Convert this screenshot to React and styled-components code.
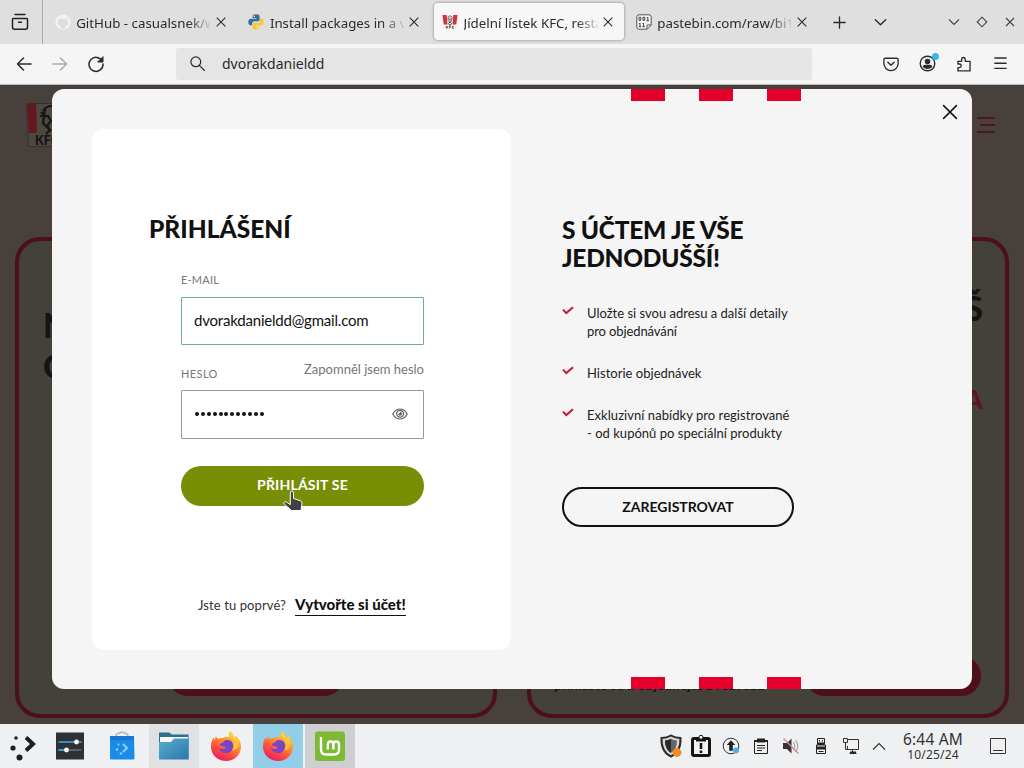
import styled, { createGlobalStyle, css } from 'styled-components';

const tabs = [
  { title: 'GitHub - casualsnek/waydroid', icon: 'github' },
  { title: 'Install packages in a virtual', icon: 'python' },
  { title: 'Jídelní lístek KFC, restaurace', icon: 'kfc', active: true },
  { title: 'pastebin.com/raw/bi1Tx', icon: 'raw' },
];

const benefits = [
  { lines: ['Uložte si svou adresu a další detaily', 'pro objednávání'], spacing: [0, -0.1] },
  { lines: ['Historie objednávek'], spacing: [0.02] },
  { lines: ['Exkluzivní nabídky pro registrované', '- od kupónů po speciální produkty'], spacing: [0.05, 0.02] },
];

function Favicon({ name }) {
  if (name === 'github') {
    return (
      <svg width="16" height="16" viewBox="0 0 16 16">
        <circle cx="8" cy="8" r="7.6" fill="#f3f3f3" />
        <path d="M5.7 15v-2.3c-2-.7-3-2-3-4.100 0-1 .3-1.700.9-2.300V4.200l1.900.8c1.600-.4 3.300-.4 4.900 0l1.900-.8v2.100c.6.6.9 1.300.9 2.300 0 2.100-1 3.400-3 4.100V15z" fill="#dedede" />
      </svg>
    );
  }
  if (name === 'python') {
    return (
      <svg width="16" height="16" viewBox="0 0 16 16">
        <path d="M7.900.3C5.300.3 4.700 1.200 4.700 2.500v1.600h3.500v.6H2.900C1.300 4.700.3 6 .3 8.100c0 2.100 1 3.300 2.500 3.300h1.300V9.600c0-1.300 1.100-2.300 2.400-2.300h3.300c1.100 0 1.800-.8 1.800-1.800v-3C11.600 1 10.200.3 7.900.3z" fill="#356e9f" />
        <path d="M8.200 15.700c2.600 0 3.200-.9 3.200-2.200v-1.600H7.900v-.6h5.300c1.600 0 2.500-1.300 2.500-3.400s-.9-3.300-2.400-3.300H12v1.800c0 1.300-1.100 2.400-2.400 2.400H6.300c-1.100 0-1.800.8-1.800 1.800v2.900c0 1.500 1.400 2.200 3.700 2.200z" fill="#f3cc3c" />
        <circle cx="6.300" cy="2.300" r=".7" fill="#fff" />
        <circle cx="9.800" cy="13.700" r=".7" fill="#fff" />
      </svg>
    );
  }
  if (name === 'kfc') {
    return (
      <svg width="16" height="16" viewBox="0 0 16 16">
        <path d="M.5 1h15l-1.700 14H2.200z" fill="#f7f0ef" />
        <path d="M.5 1h4.200l.8 9.600H1.700zM11.300 1h4.200l-1.200 9.600h-3.800z" fill="#d5313e" />
        <path d="M6 3.600 7 2h2l1.200 1.700-.6 3L8.800 8H7.200l-.9-1.400z" fill="none" stroke="#555" strokeWidth=".8" />
        <path d="M6.600 4.300h1m.9 0h1M8 5v2M6.600 9.400 8 8l1.500 1.500L8 11.500z" fill="none" stroke="#333" strokeWidth=".9" />
        <path d="M4.300 12.300v2m0-1 1.500-1M4.500 13.300l1.500 1M7.400 14.300v-2h1.400m-1.400 1h1.200m3.200-1h-1.400v2h1.400" fill="none" stroke="#333" strokeWidth=".8" />
      </svg>
    );
  }
  return (
    <svg width="16" height="16" viewBox="0 0 16 16">
      <path d="M3 .8h10q2.200 0 2.200 2v8.400l-4 4H3q-2.200 0-2.200-2V2.800q0-2 2.200-2z" fill="#f4f4f4" stroke="#555" />
      <path d="M11 15v-4h4" fill="none" stroke="#555" />
      <path d="M3 3.300h1.800v3H3zM7 3.300h1.800v3H7zM11.800 3v3.600m-1-3h1m-1.200 3h2.400M4 9v3.600m-1-3h1m-1.200 3h2.400M7.600 9v3.600m-1-3h1m-1.200 3h2.400" fill="none" stroke="#333" strokeWidth=".9" />
    </svg>
  );
}

function Cross({ size = 10, weight = 1.1 }) {
  return (
    <svg width={size} height={size} viewBox="0 0 10 10" fill="none" stroke="currentColor" strokeWidth={weight}>
      <path d="m.7.700 8.600 8.600m0-8.600L.7 9.300" />
    </svg>
  );
}

function Line({ size = 18, d, children, weight = 1.5 }) {
  return (
    <svg width={size} height={size} viewBox="0 0 18 18" fill="none" stroke="currentColor" strokeWidth={weight} strokeLinecap="round" strokeLinejoin="round">
      {d && <path d={d} />}
      {children}
    </svg>
  );
}

function Firefox() {
  return (
    <svg width="32" height="32" viewBox="0 0 32 32">
      <defs>
        <linearGradient id="ffBody" x1=".8" y1="0" x2=".25" y2="1">
          <stop offset="0" stopColor="#ffe044" />
          <stop offset=".35" stopColor="#ff9a2c" />
          <stop offset=".68" stopColor="#ff4d3c" />
          <stop offset="1" stopColor="#e9186b" />
        </linearGradient>
      </defs>
      <path d="M19.500 1c4 2.600 4.400 5.300 5 7.200l1.800-2.500c2.800 3.200 4.900 6.800 4.700 11.300C30.600 25.300 24.200 31 16.300 31 8 31 1 25.200 1 16.800c0-3.400.9-6.900 2.500-9.600L4.300 10 6 6.200l1.700 2.500c2-.7 3.800-.9 5-.6l3.200-1.300 3 .5c-.4-2.100.1-4.400.6-6.300z" fill="url(#ffBody)" />
      <path d="M10 13.500c1.300-.1 2.900-.3 3.700-2 2.300-2.300 7.300-1.900 9 1.800 2 4.200-.6 9.200-5.300 9.800-4.200.5-8.100-1.900-8.600-5.600 2.100 1.900 4.900 2.100 6.400.8 1.200-1-.1-2-1.700-1.900-2.100 0-4-1-3.500-2.900z" fill="#7a43c8" />
      <path d="M18.800 2.200c-.7 5.600 5.900 6.400 6.600 12.600-.9-1.900-2-3-3.600-3.700 2.400 2.900 2.100 6.800.1 9.300 4.800-.2 7.500-4.300 6.700-8.700-.5-2.400-1.500-3.300-2.300-5l-1.700 2.500c-.4-2.900-2.400-5.700-5.800-7z" fill="#ffd23e" opacity=".75" />
    </svg>
  );
}

function Browser() {
  return (
    <>
      <TabBar>
        <RecentBox>
          <svg width="18" height="18" viewBox="0 0 18 18" fill="none" stroke="#222" strokeWidth="1.500" strokeLinecap="round">
            <path d="M4 1.600h10M2.300 5.400h13.400q.8 0 .8.800v8q0 2-2 2h-11q-2 0-2-2v-8q0-.8.800-.8zM7.500 9.300h3" />
          </svg>
        </RecentBox>
        {tabs.map((tab) => (
          <Tab key={tab.icon} $active={tab.active}>
            <Favicon name={tab.icon} />
            <TabTitle>{tab.title}</TabTitle>
            <Cross />
          </Tab>
        ))}
        <NewTab>
          <Line size={17} weight={1.4} d="M9 3v12M3 9h12" />
          <Line size={17} weight={1.5} d="m3.500 6 5.500 5.500L14.500 6" />
        </NewTab>
        <WindowButtons>
          <svg width="12" height="12" viewBox="0 0 12 12"><path d="m1 3.500 5 5 5-5" /></svg>
          <svg width="12" height="12" viewBox="0 0 12 12"><path d="m6 1.200 4.800 4.800L6 10.800 1.200 6z" /></svg>
          <svg width="12" height="12" viewBox="0 0 12 12"><path d="m2 2 8 8m0-8-8 8" /></svg>
        </WindowButtons>
      </TabBar>
      <NavBar>
        <NavButtons>
          <Line d="M16 9H2.500m6-6-6 6 6 6" />
          <NavDim><Line d="M2 9h13.500m-6-6 6 6-6 6" /></NavDim>
          <Line>
            <path d="M15.300 6.300A7 7 0 1 0 16 9" />
            <path d="M16 2v5h-5z" fill="currentColor" strokeWidth="1" />
          </Line>
        </NavButtons>
        <UrlBar>
          <Line size={17} weight={1.300}>
            <circle cx="7.200" cy="7.200" r="5.200" />
            <path d="m11.200 11.200 5 5" />
          </Line>
          <span>dvorakdanieldd</span>
        </UrlBar>
        <Extensions>
          <Line size={16}>
            <path d="M2.500 2.500h13q1.500 0 1.500 1.500v4.500a8 8 0 0 1-16 0V4q0-1.500 1.500-1.500z" />
            <path d="m5.500 7 3.500 3.500L12.500 7" />
          </Line>
          <Account>
            <Line size={17}>
              <circle cx="9" cy="9" r="7.700" />
              <circle cx="9" cy="6.800" r="2.200" fill="currentColor" />
              <path d="M4.800 12.300q0-1.300 1.500-1.300h5.400q1.500 0 1.500 1.300-1.500 1.900-4.200 1.900t-4.200-1.900z" fill="currentColor" />
            </Line>
            <AccountDot />
          </Account>
          <Line size={16} weight={1.5} d="M2.200 6h4.200V3.700a2 2 0 0 1 4 0V6h5.400v10.800H2.200V13h1.700a2 2 0 0 0 0-4H2.200z" />
          <Line size={17} weight={1.4} d="M3 3.200h12M3 8.700h12M3 14.200h12" />
        </Extensions>
      </NavBar>
    </>
  );
}

function Backdrop() {
  return (
    <Site>
      <SiteHeader>
        <svg width="44" height="44" viewBox="0 0 44 44">
          <path d="M.5.500h43v43h-41z" fill="#4e4842" stroke="#37302c" />
          <path d="M1 1h9l1 29H3z" fill="#651720" />
          <path d="M17 8q3-5 9-5M14 13h8l3 5-4 5 3 4-4 4M19 6l-2 14 8 8M15 9l4 4-2 4" fill="none" stroke="#181512" strokeWidth="2.200" />
          <text x="9" y="42" fontFamily="Lato" fontWeight="900" fontSize="12.500" fill="#151311">KFC</text>
        </svg>
        <svg width="20" height="18" viewBox="0 0 20 18" stroke="#50161d" strokeWidth="2">
          <path d="M1 2h18M4 9h15M1 16h18" />
        </svg>
      </SiteHeader>
      <Offers>
        <Offer>
          <OfferTitle>NOVINKY<br />OD KFC</OfferTitle>
          <OfferButton />
        </Offer>
        <Offer $right>
          <OfferTitle $right>NÁŠ<em>NABÍDKA</em></OfferTitle>
          <OfferNote>přihlaste se a objednejte z rozvozu</OfferNote>
          <OfferButton $right />
        </Offer>
      </Offers>
    </Site>
  );
}

function LoginModal() {
  return (
    <Modal>
      <Stripes><i /><i /><i /></Stripes>
      <LoginCard>
        <Title>PŘIHLÁŠENÍ</Title>
        <Form>
          <Label>E-MAIL</Label>
          <Field $valid><FieldValue>dvorakdanieldd@gmail.com</FieldValue></Field>
          <LabelRow>
            <Label>HESLO</Label>
            <Forgot>Zapomněl jsem heslo</Forgot>
          </LabelRow>
          <Field>
            <Dots>{Array.from({ length: 12 }, (_, i) => <i key={i} />)}</Dots>
            <svg width="16" height="12" viewBox="0 0 16 12" fill="none" stroke="#666" strokeWidth="1.200">
              <path d="M.7 6Q3.500 1 8 1t7.300 5Q12.500 11 8 11T.7 6z" />
              <circle cx="8" cy="5.700" r="3.400" />
              <path d="M8 3.800a2 2 0 1 1-2 2q2 .3 2-2z" fill="#666" stroke="none" />
            </svg>
          </Field>
          <Submit>PŘIHLÁSIT SE</Submit>
        </Form>
        <FirstTime>
          <span>Jste tu poprvé?</span>
          <a>Vytvořte si účet!</a>
        </FirstTime>
        <Pointer width="22" height="24" viewBox="0 0 22 24">
          <path d="M8.300 3q0-2 1.600-2t1.600 2v5.500l6.500 2.100q2 .7 2 2.600l-.8 5.300v2H9.500L2.200 14q-1-1.600.4-2.200 1.300-.4 2.600.8l3.100 2z" fill="#3f4145" stroke="#fff" strokeWidth="1" />
        </Pointer>
      </LoginCard>
      <Benefits>
        <Title $wide>S ÚČTEM JE VŠE<br />JEDNODUŠŠÍ!</Title>
        <BenefitList>
          {benefits.map((item) => (
            <li key={item.lines[0]}>
              <svg width="12" height="9" viewBox="0 0 12 9" fill="none" stroke="#c9163f" strokeWidth="2.100">
                <path d="m1 3.600 3.300 3.500L11 1.200" />
              </svg>
              <div>
                {item.lines.map((line, i) => (
                  <BenefitLine key={line} $spacing={item.spacing[i]}>{line}</BenefitLine>
                ))}
              </div>
            </li>
          ))}
        </BenefitList>
        <RegisterButton>ZAREGISTROVAT</RegisterButton>
      </Benefits>
      <Close><Cross size={16} weight={0.9} /></Close>
      <Stripes $bottom><i /><i /><i /></Stripes>
    </Modal>
  );
}

function TaskBar() {
  return (
    <Panel>
      <Task>
        <svg width="32" height="32" viewBox="0 0 32 32" fill="#1c1e20">
          <path d="m20 7.500 7 6.500-7 6.500" fill="none" stroke="#1c1e20" strokeWidth="4" />
          <circle cx="10" cy="8" r="1.800" /><circle cx="7" cy="18" r="2.600" /><circle cx="13.500" cy="27.500" r="3" />
        </svg>
      </Task>
      <Task>
        <svg width="32" height="32" viewBox="0 0 32 32">
          <path d="M2 2.500h28v27H2z" fill="#2c3135" />
          <path d="M4.500 12h23" stroke="#3daee9" strokeWidth="1.500" /><path d="M4.500 20h23" stroke="#6b7072" strokeWidth="1.500" />
          <path d="M23 12h4.500" stroke="#6b7072" strokeWidth="1.500" /><path d="M4.500 20H12" stroke="#3daee9" strokeWidth="1.500" />
          <circle cx="22.500" cy="12" r="2.400" fill="#fff" /><circle cx="12.500" cy="20" r="2.400" fill="#fff" />
        </svg>
      </Task>
      <Task>
        <svg width="32" height="32" viewBox="0 0 32 32">
          <path d="M10 9V6q0-2 2-2.500l4-1.500 4 1.500q2 .5 2 2.500v3" fill="none" stroke="#adb4b8" strokeWidth="1.500" />
          <path d="M4 6h24l.5 22q0 1.500-1.500 1.500H5.500Q4 29.500 4 28z" fill="#1b8bea" />
          <path d="M4 6h24v4H4z" fill="#1679cf" />
          <path d="m17 14 4 4-4 4" fill="none" stroke="#8fcdfb" strokeWidth="2" />
          <g fill="#8fcdfb"><circle cx="12.500" cy="14.500" r="1" /><circle cx="11" cy="19.500" r="1.300" /><circle cx="15" cy="23.500" r="1.300" /></g>
        </svg>
      </Task>
      <Task $state="open">
        <svg width="32" height="32" viewBox="0 0 32 32">
          <defs><linearGradient id="folder" x2="1" y2="1"><stop stopColor="#5dadd1" /><stop offset="1" stopColor="#2679a9" /></linearGradient></defs>
          <path d="M1 2.500h10l3 2h16.500v11H1z" fill="#28718f" />
          <path d="M2 7h28v6H2z" fill="#f6f9fa" />
          <path d="M1 12h12l3-3.500h14.800v21H1z" fill="url(#folder)" />
        </svg>
      </Task>
      <Task><Firefox /></Task>
      <Task $state="active"><Firefox /></Task>
      <Task $state="urgent">
        <svg width="32" height="32" viewBox="0 0 32 32">
          <rect x="1" y="1.500" width="30" height="29.500" rx="3" fill="#7db934" />
          <path d="M7 7v12.500q0 5 5 5h8q5 0 5-5v-5q0-3-2.800-3t-2.800 3v5M19.400 14.500q0-3-2.800-3t-2.800 3v5" fill="none" stroke="#fff" strokeWidth="2.400" />
        </svg>
      </Task>
      <Tray>
        <span>
          <svg width="24" height="24" viewBox="0 0 24 24">
            <path d="M12 1.500q4 2.500 9.500 2.500.5 14-9.500 18.500Q2 18 2.500 4 8 4 12 1.500z" fill="#d8d8d8" stroke="#2d2d2d" strokeWidth="2" />
            <path d="M12 4.800q2.700 1.500 6 1.700 0 9-6 12.300-6-3.300-6-12.300 3.300-.2 6-1.700z" fill="#666" />
            <path d="M12 5v14q-6-3.500-6-12.500 3.500-.2 6-1.500z" fill="#292929" />
            <circle cx="18" cy="18.500" r="4.400" fill="#f28b22" />
          </svg>
        </span>
        <span>
          <svg width="22" height="24" viewBox="0 0 22 24">
            <rect x="2.500" y="4.500" width="17" height="17" rx="1.500" fill="#f2f2f2" stroke="#151515" strokeWidth="3" />
            <path d="M6 3.500h10v4H6z" fill="#151515" /><circle cx="11" cy="3.300" r="2" fill="#fff" stroke="#151515" />
            <path d="M9.700 9h2.600v6H9.700zm0 7.500h2.600V19H9.700z" fill="#151515" />
          </svg>
        </span>
        <span>
          <svg width="18" height="18" viewBox="0 0 18 18">
            <circle cx="9" cy="9" r="7.800" fill="none" stroke="#333" /><path d="M9 3.300 13.300 8h-2.500v5.700H7.200V8H4.700z" fill="#222" />
            <circle cx="14" cy="13.500" r="3" fill="#52acee" />
          </svg>
        </span>
        <span>
          <svg width="18" height="18" viewBox="0 0 18 18" fill="none" stroke="#222">
            <path d="M2.500 3.500h13v13h-13z" /><path d="M5 1.500h8v4H5zM2 3h14v2H2z" fill="#222" stroke="none" /><path d="M5 8.500h8m-8 2.500h8M5 13.500h5" />
          </svg>
        </span>
        <span>
          <svg width="18" height="18" viewBox="0 0 18 18" fill="none">
            <path d="M1 6h4l4.500-4.500v15L5 12H1z" fill="#333" /><path d="M11.500 5q3 4 0 8m2-10q4.500 6 0 12" stroke="#999" /><path d="m1.500 1.500 15 15" stroke="#d8868d" strokeWidth="1.200" />
          </svg>
        </span>
        <span>
          <svg width="18" height="18" viewBox="0 0 18 18" fill="none" stroke="#222">
            <path d="M5.500 1.500h7v6h-7zM4.500 8h9v8.500h-9z" /><path d="M6 5.500h6V8H6zm-1 4h8v3H5z" fill="#222" stroke="none" /><path d="M7.500 3v1.500m3-1.500v1.500M6.500 14.500h5" />
          </svg>
        </span>
        <span>
          <svg width="18" height="18" viewBox="0 0 18 18" fill="none" stroke="#333">
            <path d="M6 2.500h10.500v10H5.500V9M1.500 1.500h4v4h-4zm2 4v7H6M10.500 12.500V16M7.500 16.500h7" /><path d="M8 14.500h6v2H8z" fill="#222" stroke="none" />
          </svg>
        </span>
        <Expand>
          <svg width="14" height="9" viewBox="0 0 14 9" fill="none" stroke="#333" strokeWidth="1.100"><path d="m1 7.500 6-6 6 6" /></svg>
        </Expand>
      </Tray>
      <Clock>6:44 AM<small>10/25/24</small></Clock>
      <svg width="18" height="18" viewBox="0 0 18 18" fill="none" stroke="#333"><path d="M1.500 1.500h15v15h-15zM4 13.500h10" /></svg>
    </Panel>
  );
}

function App() {
  return (
    <Screen>
      <GlobalStyle />
      <Browser />
      <Viewport>
        <Backdrop />
        <LoginModal />
      </Viewport>
      <TaskBar />
    </Screen>
  );
}

const GlobalStyle = createGlobalStyle`
    * {
        box-sizing: border-box;
    }

    body {
        margin: 0;
        overflow: hidden;
    }

    svg {
        display: block;
        flex: none;
    }
`;

const Screen = styled.div`
    display: flex;
    flex-direction: column;
    width: 1024px;
    height: 768px;
    overflow: hidden;
    font-family: 'Noto Sans', sans-serif;
    color: #2b2b2d;
`;

/* browser chrome */
const TabBar = styled.div`
    display: flex;
    align-items: center;
    height: 44px;
    background: #dfdfdf;
`;
const RecentBox = styled.div`
    display: flex;
    align-items: center;
    justify-content: center;
    width: 43px;
    height: 44px;
    padding-right: 2px;
    border-right: 1px solid #aaa;
`;
const Tab = styled.div`
    display: flex;
    align-items: center;
    width: 190px;
    height: 37px;
    margin: 0 0 1px 3.700px;
    padding-left: 8px;
    border-radius: 4px;
    ${({ $active }) => $active && css`
        background: #f7f7f7;
        box-shadow: 0 0 3px rgba(0, 0, 0, 0.45);
    `}
`;
const TabTitle = styled.span`
    width: 134px;
    margin: 2px 5.500px 0 5.500px;
    overflow: hidden;
    white-space: nowrap;
    font-size: 13.300px;
    line-height: 20px;
    mask-image: linear-gradient(to right, #000 112px, transparent 137px);
`;
const NewTab = styled.div`
    display: flex;
    gap: 24px;
    margin-left: 13px;
`;
const WindowButtons = styled.div`
    display: flex;
    gap: 16px;
    margin: 0 8px 0 auto;
    fill: none;
    stroke: #444;
    stroke-width: 1.1px;
`;
const NavBar = styled.div`
    display: flex;
    align-items: center;
    height: 41px;
    padding-bottom: 1px;
    background: #f5f5f5;
    border-bottom: 1px solid #bbb;
`;
const NavButtons = styled.div`
    display: flex;
    gap: 18px;
    width: 176px;
    padding-left: 15px;
`;
const NavDim = styled.span`
    color: #aaa;
`;
const UrlBar = styled.div`
    display: flex;
    align-items: center;
    gap: 16px;
    width: 636px;
    height: 32px;
    padding-left: 13px;
    border-radius: 3px;
    background: #e5e5e5;
    font-size: 14px;
`;
const Extensions = styled.div`
    display: flex;
    align-items: center;
    gap: 20px;
    margin: 0 15px 0 auto;
`;
const Account = styled.div`
    position: relative;
`;
const AccountDot = styled.i`
    position: absolute;
    top: -2px;
    right: -3px;
    width: 7px;
    height: 7px;
    border-radius: 50%;
    background: #35b5f5;
`;

/* dimmed page */
const Viewport = styled.div`
    position: relative;
    height: 639px;
    overflow: hidden;
    background: #47403c;
    font-family: Lato, sans-serif;
`;
const Site = styled.div`
    display: flex;
    flex-direction: column;
`;
const SiteHeader = styled.div`
    display: flex;
    justify-content: space-between;
    align-items: center;
    height: 152px;
    padding: 0 28px 72px 26px;
`;
const Offers = styled.div`
    display: flex;
    justify-content: space-between;
    padding: 0 15px;
`;
const Offer = styled.div`
    position: relative;
    width: 482px;
    height: 481px;
    border: 4px solid #4d0f18;
    border-radius: 25px;
    background: #44413b;
`;
const OfferTitle = styled.div`
    padding: ${({ $right }) => ($right ? '46px 22px 0 0' : '63px 0 0 24px')};
    color: #151411;
    font-size: 34px;
    font-weight: 900;
    line-height: 41px;
    text-align: ${({ $right }) => ($right ? 'right' : 'left')};

    em {
        display: block;
        margin-top: 51px;
        color: #5e1423;
        font-size: 26px;
        font-style: normal;
    }
`;
const OfferButton = styled.div`
    position: absolute;
    right: ${({ $right }) => ($right ? '24px' : '149px')};
    bottom: 18px;
    width: 176px;
    height: 40px;
    border-radius: 20px;
    background: #4d0f18;
`;
const OfferNote = styled.div`
    position: absolute;
    left: 23px;
    bottom: 21px;
    color: #151411;
    font-size: 13.800px;
    font-weight: 700;
`;

/* login dialog */
const Modal = styled.div`
    position: absolute;
    top: 4px;
    left: 52px;
    display: flex;
    width: 920px;
    height: 600px;
    padding: 40px;
    border-radius: 12px;
    background: #f5f5f5;
    color: #111;
`;
const Stripes = styled.div`
    position: absolute;
    left: 579px;
    ${({ $bottom }) => ($bottom ? 'bottom: 0;' : 'top: 0;')}
    display: flex;
    gap: 34px;

    i {
        width: 34px;
        height: 12px;
        background: #e4002b;
    }
`;
const LoginCard = styled.div`
    position: relative;
    width: 419px;
    height: 521px;
    padding: 86px 57px 0;
    border-radius: 12px;
    background: #fff;
`;
const Title = styled.div`
    font-size: 24.500px;
    line-height: 28px;
    font-weight: 900;
    white-space: nowrap;
    letter-spacing: ${({ $wide }) => ($wide ? '-0.25px' : '0')};
`;
const Form = styled.div`
    width: 243px;
    margin: 29px 0 0 32px;
`;
const Label = styled.div`
    color: #777;
    font-size: 11px;
    line-height: 16px;
    letter-spacing: 0.200px;
`;
const LabelRow = styled.div`
    display: flex;
    justify-content: space-between;
    margin-top: 21px;

    ${Label} {
        margin: 0 0 8px;
        letter-spacing: 0.400px;
    }
`;
const Forgot = styled.div`
    margin-top: -5px;
    color: #777;
    font-size: 13px;
    line-height: 16px;
`;
const Field = styled.div`
    display: flex;
    align-items: center;
    justify-content: space-between;
    height: ${({ $valid }) => ($valid ? 48 : 49)}px;
    margin-top: ${({ $valid }) => ($valid ? 9 : 0)}px;
    padding: 0 15px 2px 12px;
    border: 1px solid ${({ $valid }) => ($valid ? '#6dae92' : '#999')};
    border-radius: 1px;
`;
const FieldValue = styled.span`
    font-size: 15px;
    letter-spacing: -0.200px;
`;
const Dots = styled.div`
    display: flex;
    gap: 1.900px;
    padding: 1px 0 0 1px;

    i {
        width: 4px;
        height: 4px;
        border-radius: 50%;
        background: #111;
    }
`;
const Submit = styled.div`
    height: 40px;
    margin-top: 27px;
    border-radius: 20px;
    background: #788e05;
    color: #fff;
    font-size: 14px;
    font-weight: 700;
    line-height: 38px;
    letter-spacing: 0.200px;
    text-align: center;
`;
const FirstTime = styled.div`
    display: flex;
    align-items: baseline;
    gap: 9px;
    margin: 88px 0 0 49px;
    color: #333;
    font-size: 13px;
    letter-spacing: 0.100px;
    white-space: nowrap;

    a {
        padding-bottom: 1px;
        border-bottom: 1px solid #111;
        color: #111;
        font-size: 15px;
        font-weight: 900;
        line-height: 20px;
        letter-spacing: 0;
    }
`;
const Pointer = styled.svg`
    position: absolute;
    top: 361px;
    left: 190px;
`;
const Benefits = styled.div`
    width: 240px;
    padding: 87px 0 0 0;
    margin-left: 51px;
`;
const BenefitList = styled.ul`
    display: flex;
    flex-direction: column;
    gap: 24px;
    margin: 32px 0 45px;
    padding: 0;
    list-style: none;

    li {
        display: flex;
        gap: 13px;
    }

    li > svg {
        margin-top: 2px;
    }
`;
const BenefitLine = styled.div`
    color: #222;
    font-size: 13px;
    line-height: 18px;
    white-space: nowrap;
    letter-spacing: ${({ $spacing }) => $spacing}px;
`;
const RegisterButton = styled.div`
    width: 232px;
    height: 40px;
    border: 2px solid #111;
    border-radius: 20px;
    font-size: 14px;
    font-weight: 700;
    line-height: 36px;
    text-align: center;
`;
const Close = styled.div`
    position: absolute;
    top: 15px;
    right: 14.500px;
`;

/* desktop panel */
const Panel = styled.div`
    display: flex;
    align-items: center;
    height: 44px;
    padding-right: 17px;
    background: #eff0f1;
`;
const taskColors = { open: '#dfe1e2', active: '#93cee9', urgent: '#cfcfd2' };
const Task = styled.div`
    display: flex;
    align-items: center;
    justify-content: center;
    width: 50px;
    height: 44px;
    margin-right: 2px;
    background: ${({ $state }) => taskColors[$state] || 'transparent'};

    &:first-child {
        width: 43px;
    }
`;
const Tray = styled.div`
    display: flex;
    align-items: center;
    margin-left: auto;

    span {
        display: flex;
        justify-content: center;
        width: 30px;
    }
`;
const Expand = styled.div`
    display: flex;
    justify-content: center;
    width: 26px;
`;
const Clock = styled.div`
    width: 82px;
    margin-right: 15px;
    color: #333;
    font-size: 15.500px;
    line-height: 17px;
    letter-spacing: 0.200px;
    text-align: center;

    small {
        display: block;
        font-size: 12px;
        line-height: 13px;
    }
`;

export default App;
